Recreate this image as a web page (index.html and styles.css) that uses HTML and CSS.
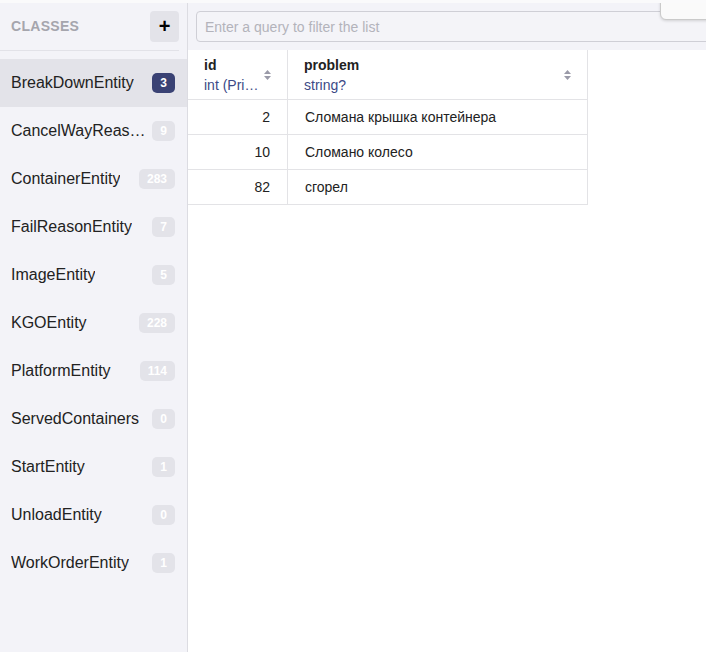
FILE: index.html
```html
<!DOCTYPE html>
<html lang="en">
<head>
<meta charset="utf-8">
<title>Classes</title>
<link rel="stylesheet" href="styles.css">
</head>
<body>
<div class="topband"></div>
<div class="app">
  <aside class="sidebar">
    <div class="side-head">
      <span class="side-title">CLASSES</span>
      <button class="add-btn" type="button">+</button>
    </div>
    <ul class="class-list">
      <li class="class-item selected"><span class="name">BreakDownEntity</span><span class="badge">3</span></li>
      <li class="class-item"><span class="name">CancelWayReasonEntity</span><span class="badge">9</span></li>
      <li class="class-item"><span class="name">ContainerEntity</span><span class="badge">283</span></li>
      <li class="class-item"><span class="name">FailReasonEntity</span><span class="badge">7</span></li>
      <li class="class-item"><span class="name">ImageEntity</span><span class="badge">5</span></li>
      <li class="class-item"><span class="name">KGOEntity</span><span class="badge">228</span></li>
      <li class="class-item"><span class="name">PlatformEntity</span><span class="badge">114</span></li>
      <li class="class-item"><span class="name">ServedContainers</span><span class="badge">0</span></li>
      <li class="class-item"><span class="name">StartEntity</span><span class="badge">1</span></li>
      <li class="class-item"><span class="name">UnloadEntity</span><span class="badge">0</span></li>
      <li class="class-item"><span class="name">WorkOrderEntity</span><span class="badge">1</span></li>
    </ul>
  </aside>
  <main class="main">
    <div class="main-head">
      <input class="query" type="text" placeholder="Enter a query to filter the list">
    </div>
    <div class="grid">
      <div class="hcell">
        <div class="hlabel"><div class="hname">id</div><div class="htype">int (Primary key)</div></div>
        <svg class="sort" width="7" height="10" viewBox="0 0 7 10"><path d="M0 4 L3.5 0 L7 4 Z M0 6 L3.5 10 L7 6 Z"/></svg>
      </div>
      <div class="hcell">
        <div class="hlabel"><div class="hname">problem</div><div class="htype">string?</div></div>
        <svg class="sort" width="7" height="10" viewBox="0 0 7 10"><path d="M0 4 L3.5 0 L7 4 Z M0 6 L3.5 10 L7 6 Z"/></svg>
      </div>
      <div class="cell num">2</div><div class="cell">Сломана крышка контейнера</div>
      <div class="cell num">10</div><div class="cell">Сломано колесо</div>
      <div class="cell num">82</div><div class="cell">сгорел</div>
    </div>
    <div class="popover"></div>
  </main>
</div>
</body>
</html>
```
FILE: styles.css
```css
* { box-sizing: border-box; }
html, body { margin: 0; padding: 0; }
body {
  font-family: "Liberation Sans", Arial, sans-serif;
  color: #222;
  width: 706px;
  height: 652px;
  overflow: hidden;
  background: #fff;
}
.topband { height: 3px; background: #fafafb; }
.app {
  display: grid;
  grid-template-columns: 188px 1fr;
  height: 649px;
}
.sidebar {
  background: #f3f3f8;
  border-right: 1px solid #dcdce2;
  display: flex;
  flex-direction: column;
}
.side-head {
  height: 48px;
  margin-right: 8px;
  padding-left: 11px;
  padding-bottom: 1px;
  display: flex;
  align-items: center;
  justify-content: space-between;
  border-bottom: 1px solid #e2e2e8;
}
.side-title {
  font-size: 14px;
  font-weight: bold;
  color: #a5a5ad;
  letter-spacing: 0.3px;
}
.add-btn {
  width: 29px;
  height: 31px;
  border: none;
  border-radius: 4px;
  background: #e3e3e9;
  color: #000;
  font-family: "Liberation Sans", Arial, sans-serif;
  font-size: 20px;
  font-weight: bold;
  line-height: 31px;
  padding: 0;
}
.class-list {
  list-style: none;
  margin: 0;
  padding: 8px 0 0;
}
.class-item {
  height: 48px;
  padding: 0 12px 0 11px;
  display: flex;
  align-items: center;
  justify-content: space-between;
  gap: 5px;
  font-size: 16px;
  color: #222;
}
.class-item.selected { background: #e3e3e9; }
.name {
  min-width: 0;
  overflow: hidden;
  white-space: nowrap;
  text-overflow: ellipsis;
}
.badge {
  flex: none;
  height: 20px;
  line-height: 20px;
  padding: 0 8px;
  border-radius: 5px;
  background: #e3e3e9;
  color: #fff;
  font-size: 12px;
  font-weight: bold;
}
.selected .badge { background: #3a4274; }
.main {
  position: relative;
  overflow: hidden;
  background: #fff;
}
.main-head {
  height: 47px;
  background: #f3f3f8;
  padding-left: 8px;
  display: flex;
  align-items: center;
}
.query {
  flex: none;
  width: 540px;
  height: 31px;
  border: 1px solid #cfcfd6;
  border-radius: 4px;
  background: #f4f4f8;
  padding: 0 8px;
  font-family: "Liberation Sans", Arial, sans-serif;
  font-size: 14px;
  color: #222;
}
.query::placeholder { color: #b3b3bb; }
.grid {
  display: grid;
  grid-template-columns: 100px 300px;
  width: 400px;
}
.hcell {
  height: 50px;
  border-right: 1px solid #e3e3e6;
  border-bottom: 1px solid #e3e3e6;
  padding: 0 16px;
  display: flex;
  align-items: center;
  gap: 4px;
  font-size: 14px;
}
.hlabel { flex: 1; min-width: 0; }
.hname { font-weight: bold; line-height: 20px; color: #222; }
.htype {
  line-height: 20px;
  color: #3c4a86;
  white-space: nowrap;
  overflow: hidden;
  text-overflow: ellipsis;
}
.sort { flex: none; fill: #9a9aa8; }
.cell {
  height: 35px;
  border-right: 1px solid #e3e3e6;
  border-bottom: 1px solid #e3e3e6;
  padding: 0 17px;
  display: flex;
  align-items: center;
  font-size: 14px;
  color: #222;
  white-space: nowrap;
}
.cell.num { justify-content: flex-end; }
.popover {
  position: absolute;
  top: -4px;
  left: 472px;
  width: 60px;
  height: 21px;
  background: #fafafa;
  border: 1px solid #cacaca;
  border-radius: 0 0 0 6px;
  box-shadow: 0 1px 3px rgba(0,0,0,0.15);
}
```
